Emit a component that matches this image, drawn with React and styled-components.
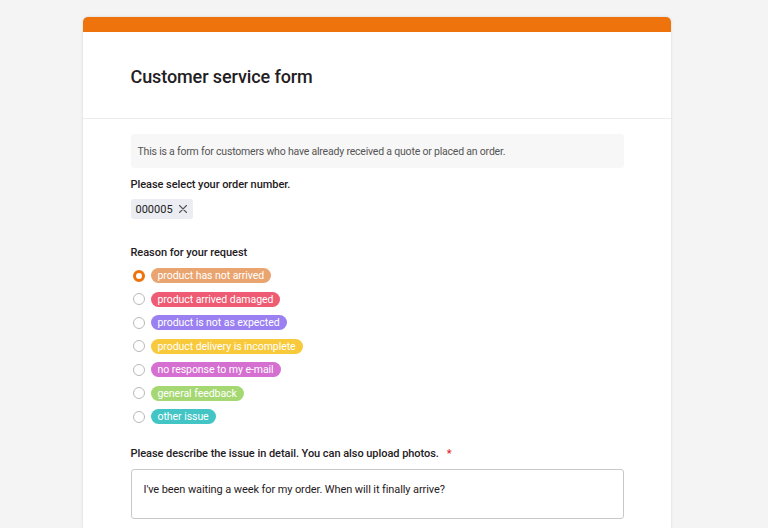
import styled, { createGlobalStyle } from "styled-components";
import { useState } from "react";

const GlobalStyle = createGlobalStyle`
  html, body {
    margin: 0;
    padding: 0;
    background: #f4f4f4;
    font-family: Roboto, "Liberation Sans", Arial, sans-serif;
    color: #1f2023;
  }
`;

const reasons = [
  { label: "product has not arrived", color: "#e9a46f" },
  { label: "product arrived damaged", color: "#ef5b73" },
  { label: "product is not as expected", color: "#9a80f0" },
  { label: "product delivery is incomplete", color: "#f8c93a" },
  { label: "no response to my e-mail", color: "#d56fd1" },
  { label: "general feedback", color: "#a5d872" },
  { label: "other issue", color: "#43c5c6" },
];

const App = () => {
  const [reason, setReason] = useState(0);
  const [text, setText] = useState(
    "I've been waiting a week for my order. When will it finally arrive?"
  );

  return (
    <>
      <GlobalStyle />
      <Page>
        <Card>
          <Header>
            <Title>Customer service form</Title>
          </Header>
          <Body>
            <Info>
              This is a form for customers who have already received a quote or
              placed an order.
            </Info>
            <Field>
              <Label>Please select your order number.</Label>
              <Chip>
                000005
                <svg width="10" height="10" viewBox="0 0 10 10">
                  <path
                    d="M1.5 1.5L8.5 8.5M8.5 1.5L1.5 8.5"
                    stroke="#555"
                    strokeWidth="1.1"
                    strokeLinecap="round"
                  />
                </svg>
              </Chip>
            </Field>
            <Field $top={26}>
              <Label>Reason for your request</Label>
              <Options>
                {reasons.map((r, i) => (
                  <Option key={r.label} onClick={() => setReason(i)}>
                    <Radio $checked={reason === i} />
                    <Tag $color={r.color}>{r.label}</Tag>
                  </Option>
                ))}
              </Options>
            </Field>
            <Field $top={21}>
              <Label>
                Please describe the issue in detail. You can also upload photos.
                <Required>*</Required>
              </Label>
              <TextArea
                rows="2"
                value={text}
                onChange={(e) => setText(e.target.value)}
              />
            </Field>
          </Body>
        </Card>
      </Page>
    </>
  );
};

const Page = styled.div`
  display: flex;
  justify-content: center;
  padding-top: 17px;
  height: 528px;
  box-sizing: border-box;
  overflow: hidden;
`;

const Card = styled.div`
  width: 588px;
  margin-left: -15px;
  background: #fff;
  border-top: 15px solid #ee730c;
  border-radius: 5px 5px 0 0;
  box-shadow: 0 0 3px rgba(0, 0, 0, 0.12);
  flex-shrink: 0;
`;

const Header = styled.div`
  height: 87px;
  padding: 3px 48px 0;
  box-sizing: border-box;
  display: flex;
  align-items: center;
  border-bottom: 1px solid #ececec;
`;

const Title = styled.h1`
  margin: 0;
  font-size: 18px;
  font-weight: 500;
  letter-spacing: -0.1px;
  color: #1f2023;
`;

const Body = styled.div`
  padding: 15px 47px 0 48px;
`;

const Info = styled.div`
  background: #f7f7f7;
  border-radius: 3px;
  height: 34px;
  padding: 0 7px;
  display: flex;
  align-items: center;
  font-size: 10.5px;
  letter-spacing: -0.2px;
  color: #555;
`;

const Field = styled.div`
  margin-top: ${({ $top }) => $top ?? 9}px;
`;

const Label = styled.div`
  font-size: 11px;
  font-weight: 500;
  color: #1f2023;
  line-height: 16px;
  letter-spacing: -0.05px;
`;

const Required = styled.span`
  color: #e5242b;
  margin-left: 8px;
`;

const Chip = styled.div`
  display: inline-flex;
  align-items: center;
  gap: 5px;
  margin-top: 6px;
  height: 20px;
  padding: 0 5px;
  background: #ecedf2;
  border-radius: 3px;
  font-size: 11px;
  color: #222;
`;

const Options = styled.div`
  display: flex;
  flex-direction: column;
  gap: 8px;
  margin-top: 7px;
`;

const Option = styled.div`
  display: flex;
  align-items: center;
  gap: 6px;
  height: 15.5px;
  cursor: pointer;
`;

const Radio = styled.span`
  width: 12px;
  height: 12px;
  margin-left: 2px;
  box-sizing: border-box;
  border-radius: 50%;
  border: ${({ $checked }) =>
    $checked ? "3.5px solid #ee730c" : "1px solid #b9b9b9"};
  background: #fff;
`;

const Tag = styled.span`
  display: inline-flex;
  align-items: center;
  height: 15px;
  padding: 0 7px;
  border-radius: 8px;
  background: ${({ $color }) => $color};
  color: #fff;
  font-size: 10.5px;
  letter-spacing: -0.05px;
`;

const TextArea = styled.textarea`
  display: block;
  margin-top: 7px;
  width: 100%;
  height: 50px;
  box-sizing: border-box;
  border: 1px solid #c9c9c9;
  border-radius: 3px;
  padding: 13px 12px;
  font-family: inherit;
  font-size: 11px;
  letter-spacing: -0.1px;
  color: #1f2023;
  resize: none;
  outline: none;
`;

export default App;
